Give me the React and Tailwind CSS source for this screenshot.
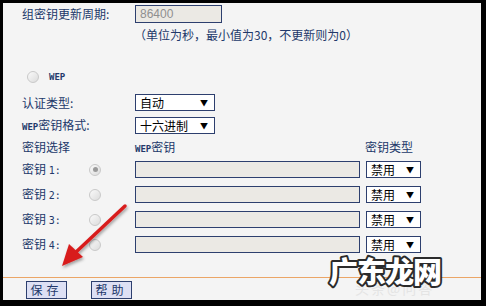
function Radio({ checked, className = '' }) {
  return (
    <span
      className={`flex h-[12px] w-[12px] items-center justify-center rounded-full border border-[#c9c9c9] bg-gradient-to-br from-[#fafafa] to-[#dcdcdc] ${className}`}
    >
      {checked && <span className="h-[5px] w-[5px] rounded-full bg-[#9a9a9a]" />}
    </span>
  )
}

function Select({ value, width }) {
  return (
    <div
      className="flex h-full items-center justify-between border border-[#2d3f6e] bg-white pr-[6px] pl-[4px] text-[12px] text-black"
      style={{ width }}
    >
      <span>{value}</span>
      <span className="text-[8px]">▼</span>
    </div>
  )
}

function App() {
  const keys = ['1', '2', '3', '4']

  return (
    <div className="h-[306px] w-[486px] border-t-[3px] border-r-[5px] border-b-[6px] border-l-[3px] border-black bg-black font-['Noto_Sans_CJK_SC','Noto_Sans',sans-serif]">
      <div className="relative flex h-full flex-col bg-[#f4f4f4] text-[12px] leading-none text-[#22386a]">
        <div className="mt-[2px] flex h-[18px] items-center pl-[19px]">
          <span className="w-[113px]">组密钥更新周期:</span>
          <div className="flex h-full w-[87px] items-center border border-[#2d3f6e] bg-[#ebe9e4] pl-[4px] font-['Liberation_Sans',sans-serif] text-[12px] text-[#8f8f8f]">
            86400
          </div>
        </div>
        <div className="mt-[4px] flex h-[16px] items-center pl-[131px]">
          （单位为秒，最小值为30，不更新则为0）
        </div>

        <div className="mt-[26px] flex h-[16px] items-center pl-[24px]">
          <Radio />
          <span className="ml-[10px] font-['DejaVu_Sans_Mono',monospace] text-[9px] font-bold">WEP</span>
        </div>

        <div className="mt-[9px] flex h-[17px] items-center pl-[19px]">
          <span className="w-[113px]">认证类型:</span>
          <Select value="自动" width={80} />
        </div>
        <div className="mt-[6px] flex h-[17px] items-center pl-[19px]">
          <span className="w-[113px]">
            <span className="font-['DejaVu_Sans_Mono',monospace] text-[9px] font-bold">WEP</span>密钥格式:
          </span>
          <Select value="十六进制" width={80} />
        </div>

        <div className="mt-[5px] flex h-[16px] items-center pl-[19px]">
          <span className="w-[113px]">密钥选择</span>
          <span className="w-[230px]">
            <span className="font-['DejaVu_Sans_Mono',monospace] text-[9px] font-bold">WEP</span>密钥
          </span>
          <span>密钥类型</span>
        </div>

        {keys.map((k, i) => (
          <div key={k} className={`${i === 0 ? 'mt-[6px]' : 'mt-[8px]'} flex h-[17px] items-center pl-[19px]`}>
            <span className="flex w-[113px] items-center">
              <span className="w-[67px]">
                密钥 <span className="font-['DejaVu_Sans_Mono',monospace] text-[10px]">{k}:</span>
              </span>
              <Radio checked={i === 0} />
            </span>
            <div className="h-full w-[225px] border border-[#2d3f6e] bg-[#ebe9e4]" />
            <div className="ml-[6px] h-full">
              <Select value="禁用" width={55} />
            </div>
          </div>
        ))}

        <div className="mt-[24px] h-px bg-[#eba566]" />

        <div className="mt-[3px] flex h-[18px] items-center gap-[24px] pl-[23px]">
          <div className="flex h-full w-[41px] items-center justify-center border border-[#2d3f6e] bg-[#dde0f4] tracking-[4px] text-[#22386a]">
            保存
          </div>
          <div className="flex h-full w-[41px] items-center justify-center border border-[#2d3f6e] bg-[#dde0f4] tracking-[4px] text-[#22386a]">
            帮助
          </div>
        </div>

        <svg className="pointer-events-none absolute top-0 left-0" width="478" height="297">
          <defs>
            <filter id="sh" x="-20%" y="-20%" width="140%" height="140%">
              <feDropShadow dx="1" dy="2" stdDeviation="1.5" floodColor="#000" floodOpacity="0.35" />
            </filter>
          </defs>
          <g filter="url(#sh)">
            <line x1="122" y1="203" x2="72" y2="250" stroke="#d81e1e" strokeWidth="3.5" strokeLinecap="round" />
            <polygon points="59,263 66,241 80,254" fill="#d81e1e" />
          </g>
          <text x="352" y="291" fontSize="14" letterSpacing="2" fill="#e4e4e4">
            头条@问答
          </text>
          <text
            x="326"
            y="280"
            fontSize="29"
            fontWeight="900"
            letterSpacing="-1"
            fill="#ffffff"
            stroke="#2b2b2b"
            strokeWidth="4"
            strokeLinejoin="round"
            paintOrder="stroke"
          >
            广东龙网
          </text>
        </svg>
      </div>
    </div>
  )
}

export default App
